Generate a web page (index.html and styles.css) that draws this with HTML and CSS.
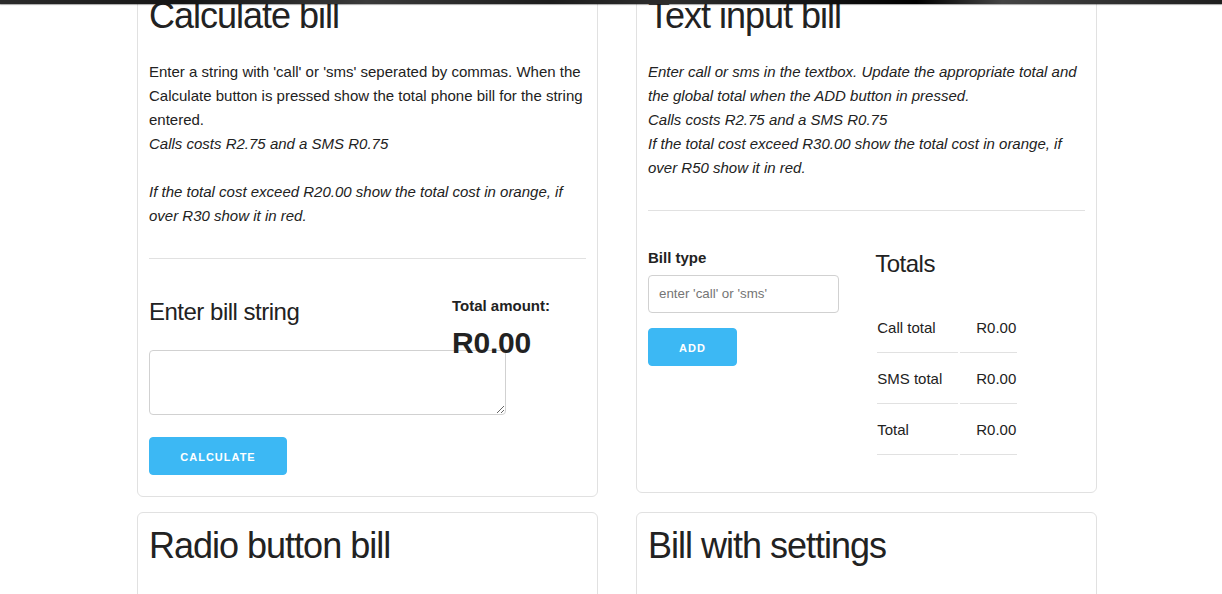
FILE: index.html
```html
<!DOCTYPE html>
<html lang="en">
<head>
<meta charset="utf-8">
<title>Bills</title>
<link rel="stylesheet" href="styles.css">
</head>
<body>
<div class="topbar"></div>
<div class="container">
  <section class="card">
    <h3 class="title">Calculate bill</h3>
    <p class="desc">Enter a string with 'call' or 'sms' seperated by commas. When the Calculate button is pressed show the total phone bill for the string entered.<br><em>Calls costs R2.75 and a SMS R0.75</em><br><br><em>If the total cost exceed R20.00 show the total cost in orange, if over R30 show it in red.</em></p>
    <hr class="rule">
    <div class="row">
      <div class="col-8">
        <h5 class="sub">Enter bill string</h5>
        <textarea class="billstring"></textarea>
        <button class="btn btn-last">Calculate</button>
      </div>
      <div class="col-4">
        <label class="lbl">Total amount:</label>
        <div class="amount">R0.00</div>
      </div>
    </div>
  </section>

  <section class="card">
    <h3 class="title">Text input bill</h3>
    <p class="desc"><em>Enter call or sms in the textbox. Update the appropriate total and the global total when the ADD button in pressed.<br>Calls costs R2.75 and a SMS R0.75<br>If the total cost exceed R30.00 show the total cost in orange, if over R50 show it in red.</em></p>
    <hr class="rule">
    <div class="row">
      <div class="col-half">
        <label class="lbl">Bill type</label>
        <input class="textin" type="text" placeholder="enter 'call' or 'sms'">
        <button class="btn">Add</button>
      </div>
      <div class="col-half second">
        <h5 class="sub">Totals</h5>
        <table class="totals">
          <tbody>
            <tr><td>Call total</td><td>R0.00</td></tr>
            <tr><td>SMS total</td><td>R0.00</td></tr>
            <tr><td>Total</td><td>R0.00</td></tr>
          </tbody>
        </table>
      </div>
    </div>
  </section>

  <section class="card tall">
    <h3 class="title">Radio button bill</h3>
  </section>

  <section class="card tall">
    <h3 class="title">Bill with settings</h3>
  </section>
</div>
</body>
</html>
```

FILE: styles.css
```css
html, body {
  margin: 0;
  padding: 0;
  background: #fff;
}
body {
  font-family: "Liberation Sans", Arial, sans-serif;
  font-size: 15px;
  line-height: 24px;
  color: #222;
  overflow: hidden;
}
.topbar {
  position: fixed;
  top: 0;
  left: 0;
  right: 0;
  height: 4px;
  background: linear-gradient(90deg, #2b2b2b 0%, #151515 15%, #3a3a3a 30%, #1c1c1c 45%, #2e2e2e 55%, #000 75%, #444 82%, #1e1e1e 100%);
  box-shadow: 0 1px 1px rgba(0,0,0,0.35);
  z-index: 10;
}
.container {
  width: 960px;
  margin: -18px 0 0 137px;
  display: grid;
  grid-template-columns: 461px 461px;
  column-gap: 38px;
  row-gap: 15px;
  align-items: start;
}
.card {
  border: 1px solid #e1e1e1;
  border-radius: 6px;
  padding: 10px 11px 10px 11px;
  box-sizing: border-box;
}
.card.tall {
  min-height: 240px;
}
.title {
  margin: 0 0 20px;
  font-size: 36px;
  line-height: 46.8px;
  font-weight: 400;
  letter-spacing: -1px;
}
.desc {
  margin: 0 0 30px;
}
.rule {
  margin: 0 0 35px;
  border: 0;
  border-top: 1px solid #e1e1e1;
  height: 0;
}
.row {
  display: flex;
  align-items: flex-start;
}
.col-8 {
  width: 65.33%;
}
.col-4 {
  width: 30.67%;
  margin-left: 4%;
}
.col-half {
  width: 48%;
}
.col-half.second {
  margin-left: 4%;
}
.sub {
  margin: 0 0 20px;
  font-size: 24px;
  line-height: 36px;
  font-weight: 400;
  letter-spacing: -0.5px;
}
.lbl {
  display: block;
  font-weight: 700;
  margin-bottom: 5px;
}
.amount {
  font-size: 30px;
  line-height: 40.5px;
  font-weight: 700;
  letter-spacing: -0.2px;
}
.billstring {
  display: block;
  width: 357px;
  height: 65px;
  box-sizing: border-box;
  padding: 6px 10px;
  border: 1px solid #d1d1d1;
  border-radius: 4px;
  margin: 0 0 22px;
  font-family: "Liberation Sans", Arial, sans-serif;
  font-size: 15px;
  background: #fff;
}
.textin {
  display: block;
  width: 191px;
  height: 38px;
  box-sizing: border-box;
  padding: 6px 10px;
  border: 1px solid #d1d1d1;
  border-radius: 4px;
  margin: 0 0 15px;
  font-family: "Liberation Sans", Arial, sans-serif;
  font-size: 13.33px;
  background: #fff;
}
.textin::placeholder {
  color: #757575;
}
.btn {
  display: block;
  height: 38px;
  padding: 0 30px;
  margin: 0 0 10px;
  border: 1px solid #3cb8f4;
  border-radius: 4px;
  background: #3cb8f4;
  color: #fff;
  font-family: "Liberation Sans", Arial, sans-serif;
  font-size: 11px;
  font-weight: 700;
  letter-spacing: 1px;
  line-height: 38px;
  text-transform: uppercase;
  box-sizing: border-box;
}
.btn-last {
  margin-bottom: 11px;
  min-width: 138px;
}
.totals {
  border-collapse: separate;
  border-spacing: 2px;
  margin: 0 0 25px;
  font-size: 15px;
}
.totals td {
  padding: 12px 15px;
  text-align: left;
  border-bottom: 1px solid #e1e1e1;
  line-height: 24px;
}
.totals td:first-child {
  padding-left: 0;
  padding-right: 16px;
}
.totals td:last-child {
  padding-right: 1px;
  padding-left: 16px;
}
```
